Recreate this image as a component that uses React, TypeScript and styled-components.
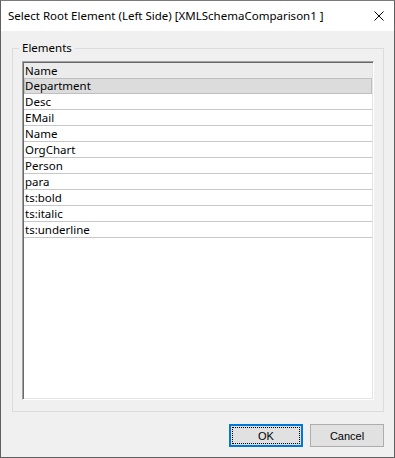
import styled, { createGlobalStyle } from "styled-components";

const GlobalStyle = createGlobalStyle`
  html, body {
    margin: 0;
    padding: 0;
    background: #ffffff;
  }
  * {
    box-sizing: border-box;
  }
`;

const Window = styled.div`
  display: flex;
  flex-direction: column;
  width: 395px;
  height: 458px;
  border: 1px solid #5f5f5f;
  border-top-color: #7a7a7a;
  background: #f0f0f0;
  font-family: "Noto Sans", "Liberation Sans", sans-serif;
  font-size: 11px;
  color: #000;
`;

const TitleBar = styled.div`
  display: flex;
  align-items: center;
  justify-content: space-between;
  height: 30px;
  padding: 0 10px 0 7px;
  background: #ffffff;
`;

const Title = styled.span`
  font-size: 11.5px;
  line-height: 16px;
  color: #000;
`;

const CloseButton = styled.div`
  display: flex;
  align-items: center;
  justify-content: center;
  width: 10px;
  height: 10px;
`;

const Body = styled.div`
  flex: 1;
  display: flex;
  flex-direction: column;
  min-height: 0;
  padding: 10px 10px 10px 11px;
`;

const Group = styled.fieldset`
  flex: 1;
  display: flex;
  flex-direction: column;
  min-height: 0;
  margin: 0;
  padding: 6px 9px 11px 9px;
  border: 1px solid #dcdcdc;
`;

const Legend = styled.legend`
  margin-left: -3px;
  padding: 0 3px;
  font-size: 11.5px;
  line-height: 14px;
`;

const ListBox = styled.div`
  flex: 1;
  display: flex;
  flex-direction: column;
  background: #ffffff;
  border-top: 1px solid #a0a0a0;
  border-left: 1px solid #a0a0a0;
  border-right: 1px solid #ffffff;
  border-bottom: 1px solid #ffffff;
  box-shadow: inset 1px 1px 0 #696969, inset -1px -1px 0 #e3e3e3;
  padding: 1px;
`;

const Row = styled.div<{ $kind?: "header" | "selected" | "item" }>`
  display: flex;
  align-items: center;
  height: ${({ $kind }) => ($kind === "header" ? "15px" : "16px")};
  padding-left: ${({ $kind }) => ($kind === "selected" ? "0px" : "1px")};
  background: ${({ $kind }) =>
    $kind === "header" ? "#ebebeb" : $kind === "selected" ? "#dcdcdc" : "#ffffff"};
  border: ${({ $kind }) => ($kind === "selected" ? "1px solid #bfbfbf" : "none")};
  border-bottom: ${({ $kind }) =>
    $kind === "header" ? "none" : $kind === "selected" ? "1px solid #bfbfbf" : "1px solid #c8c8c8"};
  font-size: 11.5px;
  line-height: 14px;
  white-space: nowrap;
`;

const Footer = styled.div`
  display: flex;
  justify-content: flex-end;
  gap: 7px;
  margin-top: 12px;
`;

const Button = styled.div<{ $default?: boolean }>`
  display: flex;
  align-items: center;
  justify-content: center;
  width: 74px;
  height: 23px;
  background: #e1e1e1;
  border: ${({ $default }) => ($default ? "2px solid #0078d7" : "1px solid #adadad")};
  padding: ${({ $default }) => ($default ? "1px" : "2px")};
  font-family: "Liberation Sans", Arial, sans-serif;
  font-size: 11px;
`;

const ButtonLabel = styled.span<{ $focused?: boolean }>`
  display: flex;
  align-items: center;
  justify-content: center;
  width: 100%;
  height: 100%;
  border: 1px dotted ${({ $focused }) => ($focused ? "#000" : "transparent")};
`;

const items = [
  "Desc",
  "EMail",
  "Name",
  "OrgChart",
  "Person",
  "para",
  "ts:bold",
  "ts:italic",
  "ts:underline",
];

export default function App() {
  return (
    <>
      <GlobalStyle />
      <Window>
        <TitleBar>
          <Title>Select Root Element (Left Side) [XMLSchemaComparison1 ]</Title>
          <CloseButton>
            <svg width="10" height="10" viewBox="0 0 10 10">
              <path d="M0.5 0.5 L9.5 9.5 M9.5 0.5 L0.5 9.5" stroke="#000" strokeWidth="1" />
            </svg>
          </CloseButton>
        </TitleBar>
        <Body>
          <Group>
            <Legend>Elements</Legend>
            <ListBox>
              <Row $kind="header">Name</Row>
              <Row $kind="selected">Department</Row>
              {items.map((name) => (
                <Row key={name} $kind="item">
                  {name}
                </Row>
              ))}
            </ListBox>
          </Group>
          <Footer>
            <Button $default>
              <ButtonLabel $focused>OK</ButtonLabel>
            </Button>
            <Button>
              <ButtonLabel>Cancel</ButtonLabel>
            </Button>
          </Footer>
        </Body>
      </Window>
    </>
  );
}
